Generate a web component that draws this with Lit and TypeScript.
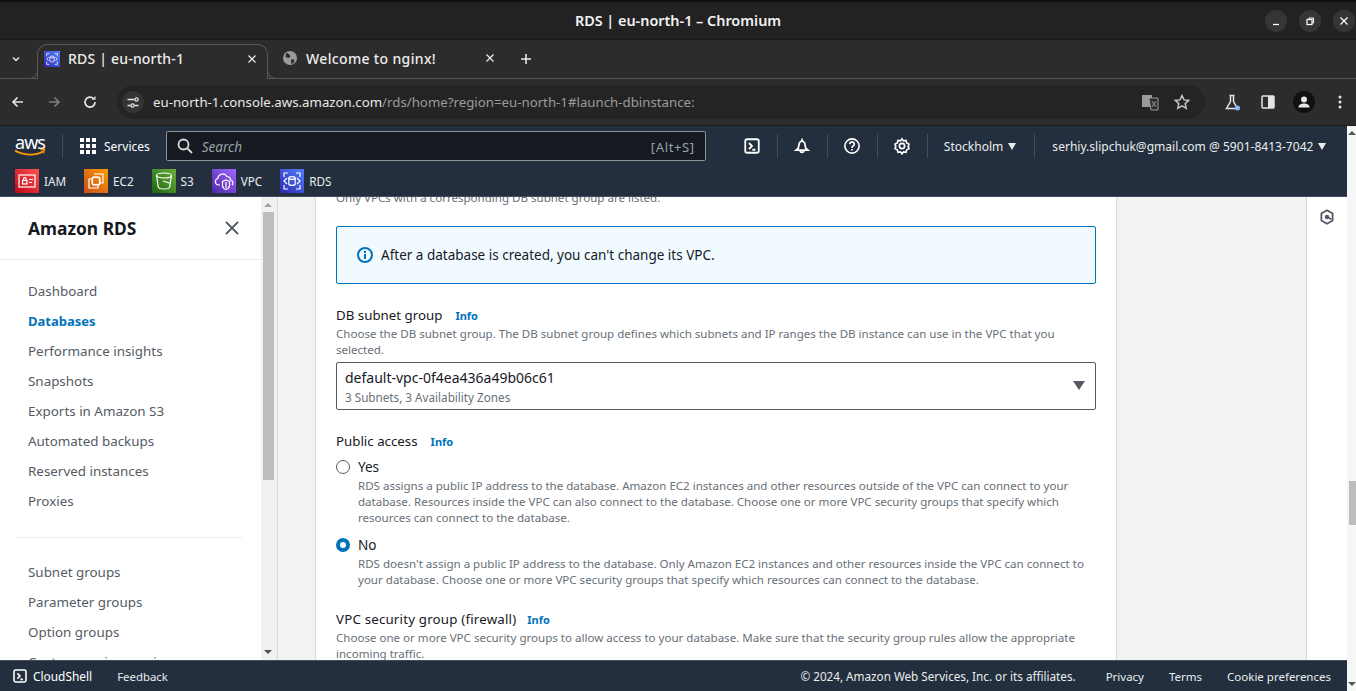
import {LitElement, html, css, svg} from 'lit';
import {customElement} from 'lit/decorators.js';

const icon = (size: number, body: unknown, box = 24) => html`<svg
  width=${size} height=${size} viewBox="0 0 ${box} ${box}" fill="none" stroke="currentColor">${body}</svg>`;

// service tiles in the favourites bar
const rdsGlyph = svg`<g stroke="#fff" stroke-width="1.2">
  <path d="M4 8V4h4M16 4h4v4M4 16v4h4M16 20h4v-4"/>
  <path d="M7 9l-3 3 3 3M17 9l3 3-3 3" />
  <ellipse cx="12" cy="9" rx="3.200" ry="1.400"/><path d="M8.800 9v6c0 .8 1.400 1.400 3.200 1.400s3.200-.6 3.200-1.400V9"/></g>`;

const favs = [
  {name: 'IAM', cls: 'iam', glyph: svg`<g stroke="#fff" stroke-width="1.2">
    <rect x="4" y="6" width="16" height="12"/><rect x="7.500" y="11.500" width="4.500" height="3.500"/>
    <path d="M8.500 11.500v-1.500a1.300 1.300 0 0 1 2.600 0v1.500M14 10.500h4M14 13.500h3"/></g>`},
  {name: 'EC2', cls: 'ec2', glyph: svg`<g stroke="#fff" stroke-width="1.2">
    <path d="M10 5h9v9h-3M8 10H5v9h9v-3"/><rect x="8.500" y="8.500" width="7" height="7"/>
    <path d="M10 7v1.500M12 7v1.500M14 7v1.500M10 15.500v1.500M12 15.500v1.500M14 15.500v1.500M7 10h1.500M7 12h1.500M7 14h1.500M15.500 10h1.500M15.500 12h1.500M15.500 14h1.500"/></g>`},
  {name: 'S3', cls: 's3', glyph: svg`<g stroke="#fff" stroke-width="1.2">
    <ellipse cx="12" cy="6.500" rx="7.500" ry="2.500"/><path d="M4.500 6.500l1.800 11.500c.2 1.200 2.800 2 5.700 2s5.500-.8 5.700-2l1.800-11.500"/>
    <path d="M11 12l8 2.500"/></g>`},
  {name: 'VPC', cls: 'vpc', glyph: svg`<g stroke="#fff" stroke-width="1.2">
    <path d="M8 16H6.500a3.300 3.300 0 0 1-.6-6.500 4.800 4.800 0 0 1 9-2 3.700 3.700 0 0 1 3.600 3.500A3 3 0 0 1 20 16"/>
    <path d="M14 11l3.500 1.500v4c0 2-1.500 3.300-3.500 4-2-.7-3.500-2-3.500-4v-4zM14 13v6"/></g>`},
  {name: 'RDS', cls: 'rds', glyph: rdsGlyph},
];

const navTop = ['Dashboard', 'Databases', 'Performance insights', 'Snapshots', 'Exports in Amazon S3',
  'Automated backups', 'Reserved instances', 'Proxies'];
const navBottom = ['Subnet groups', 'Parameter groups', 'Option groups', 'Custom engine versions'];

const terminal = svg`<rect x="3" y="3" width="18" height="18" rx="2.500" stroke-width="2.400"/>
  <path d="M8 8l4 4-4 4M12.500 17h4" stroke-width="2.400"/>`;

const closeX = svg`<path d="M2.500 2.500l7 7M9.500 2.500l-7 7" stroke-width="1.300"/>`;

@customElement('app-root')
export class AppRoot extends LitElement {
  static styles = css`
    :host {
      display: block;
      width: 1356px;
      height: 691px;
      overflow: hidden;
      font-family: "Noto Sans", sans-serif;
      color: #16191f;
    }
    .window { display: flex; flex-direction: column; height: 691px; }

    /* browser chrome */
    .titlebar {
      height: 37px;
      flex: none;
      border-top: 2px solid #0e0e0e;
      background: #222;
      display: flex;
      align-items: center;
      justify-content: flex-end;
      gap: 12px;
      padding-right: 1px;
      position: relative;
      color: #fff;
    }
    .title {
      position: absolute;
      left: 0;
      right: 0;
      top: 10px;
      text-align: center;
      font-size: 14.400px;
      line-height: 18px;
      font-weight: 600;
      color: #f2f2f2;
    }
    .winbtn {
      width: 22px;
      height: 22px;
      border-radius: 50%;
      background: #363636;
      display: flex;
      align-items: center;
      justify-content: center;
      color: #fff;
    }
    .tabstrip {
      height: 40px;
      flex: none;
      background: #2c2c2c;
      border-top: 1px solid #1a1a1a;
      box-sizing: border-box;
      border-bottom: 1px solid #585858;
      display: flex;
      align-items: flex-end;
      color: #e8e8e8;
      font-size: 14px;
    }
    .tabmenu { width: 27px; height: 32px; margin-bottom: 3px; padding-left: 10px; display: flex; align-items: center; }
    .tab {
      height: 35px;
      box-sizing: border-box;
      display: flex;
      align-items: center;
      gap: 8px;
      padding: 0 9px 7px 6px;
      width: 231px;
      margin-bottom: -1px;
      position: relative;
    }
    .tab.active {
      background: #2c2c2c;
      border: 1px solid #585858;
      border-bottom: none;
      border-radius: 10px 10px 0 0;
    }
    .tab.active::before,
    .tab.active::after {
      content: '';
      position: absolute;
      bottom: 0;
      width: 9px;
      height: 9px;
      border-bottom: 1px solid #585858;
      background: #2c2c2c;
    }
    .tab.active::before { left: -10px; border-right: 1px solid #585858; border-bottom-right-radius: 9px; }
    .tab.active::after { right: -10px; border-left: 1px solid #585858; border-bottom-left-radius: 9px; }
    .tab.active .tab-label { letter-spacing: .2px; }
    .tab.second { width: 236px; padding-left: 15px; padding-right: 8px; gap: 9px; }
    .tab.second .tab-label { letter-spacing: .35px; }
    .tab-label { flex: 1; white-space: nowrap; font-weight: 500; color: #ececec; }
    .tabicon { width: 16px; height: 16px; background: linear-gradient(45deg, #2e27ad, #527fff); display: block; }
    .plus { width: 36px; height: 32px; margin: 0 0 3px 4px; display: flex; align-items: center; justify-content: center; }

    .toolbar {
      height: 46px;
      flex: none;
      background: #2c2c2c;
      display: flex;
      align-items: center;
      color: #e3e3e3;
      border-bottom: 1px solid #1c1c1c;
      overflow: hidden;
    }
    .toolbtn { width: 36px; flex: none; display: flex; justify-content: center; align-items: center; }
    .toolbtn.dim { color: #7d7d7d; }
    .backs { display: flex; flex: none; }
    .omnibox {
      margin-left: 9px;
      width: 1088px;
      flex: none;
      height: 34px;
      border-radius: 17px;
      background: #242424;
      display: flex;
      align-items: center;
      box-sizing: border-box;
      padding-left: 5px;
      padding-right: 14px;
    }
    .siteinfo {
      width: 22px;
      height: 22px;
      border-radius: 50%;
      background: #343434;
      display: flex;
      align-items: center;
      justify-content: center;
      margin-right: 9px;
    }
    .url { flex: 1; font-size: 13.250px; white-space: nowrap; color: #e8e8e8; }
    .url span { color: #9b9b9b; }
    .omni-icons { display: flex; align-items: center; gap: 14px; }
    .tools { display: flex; align-items: center; flex: none; margin-left: 9px; }
    .avatar {
      width: 22px;
      height: 22px;
      border-radius: 50%;
      background: #111;
      display: flex;
      align-items: center;
      justify-content: center;
    }

    /* console */
    .viewport { flex: 1; min-height: 0; display: flex; }
    .page { flex: 1; min-width: 0; display: flex; flex-direction: column; }
    .pagebar {
      width: 9px;
      background: #f6f6f6;
      position: relative;
    }
    .pagebar .thumb {
      position: absolute;
      left: 2px;
      right: 0;
      top: 355px;
      height: 44px;
      background: #bdbdbd;
    }
    .pagebar .up, .pagebar .down { position: absolute; left: 1px; }
    .pagebar .up { top: 5px; border: 4px solid transparent; border-bottom: 4px solid #555; border-top: none; }
    .pagebar .down { bottom: 5px; border: 4px solid transparent; border-top: 4px solid #555; border-bottom: none; }

    .nav {
      flex: none;
      height: 71px;
      box-sizing: border-box;
      background: #232f3e;
      border-bottom: 1px solid #414d5c;
      color: #fff;
      font-size: 12px;
    }
    .navtop { height: 40px; display: flex; align-items: center; padding-left: 14px; }
    .logo { width: 32px; height: 24px; position: relative; }
    .logo b {
      display: block;
      font-weight: 400;
      font-size: 18px;
      line-height: 16px;
      letter-spacing: -1px;
      color: #fff;
      text-align: center;
    }
    .logo svg { position: absolute; left: 0; top: 14px; }
    .vsep { width: 1px; height: 24px; background: #414d5c; flex: none; }
    .logo + .vsep { margin-left: 16px; }
    .services { display: flex; align-items: center; gap: 8px; margin-right: 16px; white-space: nowrap; font-size: 12px; }
    .grid {
      display: grid;
      grid-template-columns: repeat(3, 4px);
      grid-auto-rows: 4px;
      gap: 2px;
      margin-left: 17px;
    }
    .grid i { background: #fff; display: block; }
    .search {
      width: 540px;
      height: 30px;
      box-sizing: border-box;
      border: 1px solid #879596;
      border-radius: 2px;
      background: #16191f;
      display: flex;
      align-items: center;
      padding: 0 10px;
      color: #d5dbdb;
      margin-right: 22px;
    }
    .search em { flex: 1; margin: 1px 0 0 9px; font-size: 13.500px; color: #95a5a6; }
    .search span { margin-top: 1px; font-size: 13px; letter-spacing: .65px; color: #95a5a6; }
    .navicon { width: 49px; flex: none; display: flex; justify-content: center; color: #fff; }
    .navicons { display: flex; align-items: center; }
    .region { display: flex; align-items: center; white-space: nowrap; font-size: 12.050px; color: #eaeded; margin-left: 17px; }
    .navicons + .region { margin-left: 16px; }
    .region + .vsep { margin-left: 18px; }
    .caret { width: 0; height: 0; border: 4.500px solid transparent; border-top: 7px solid #eaeded; border-bottom: none; display: inline-block; margin-left: 5px; }

    .favs { height: 30px; display: flex; align-items: flex-start; padding-left: 15px; font-size: 11.700px; color: #eaeded; }
    .fav { display: flex; align-items: center; gap: 5px; height: 24px; margin-top: 3px; margin-right: 18px; }
    .tile { width: 24px; height: 24px; display: block; }
    .iam { background: linear-gradient(45deg, #bd0816, #ff5252); }
    .ec2 { background: linear-gradient(45deg, #c8511b, #ff9900); }
    .s3 { background: linear-gradient(45deg, #1b660f, #6cae3e); }
    .vpc { background: linear-gradient(45deg, #4d27a8, #a166ff); }
    .rds { background: linear-gradient(45deg, #2e27ad, #527fff); }

    .middle { flex: 1; min-height: 0; display: flex; background: #fff; }
    .sidebar { width: 261px; flex: none; overflow: hidden; }
    .side-head {
      height: 62px;
      border-bottom: 1px solid #eaeded;
      display: flex;
      align-items: center;
      justify-content: space-between;
      padding: 0 21px 0 28px;
      font-size: 17.400px;
      font-weight: 700;
    }
    .side-head svg { color: #545b64; }
    .side-list { padding-top: 16px; }
    .side-list a {
      display: block;
      height: 30px;
      line-height: 30px;
      padding-left: 28px;
      font-size: 13.400px;
      color: #545b64;
      white-space: nowrap;
    }
    .side-list a.on { color: #0073bb; font-weight: 700; font-size: 13px; }
    .side-rule { height: 1px; background: #eaeded; margin: 21px 19px 19px 16px; }

    .sidebar-bar { width: 16px; flex: none; background: #f1f1f1; position: relative; }
    .sidebar-bar .thumb { position: absolute; left: 2px; width: 11px; top: 15px; height: 268px; background: #bdbdbd; }
    .sidebar-bar .up { position: absolute; left: 3px; top: 6px; border: 4px solid transparent; border-bottom: 4px solid #a3a3a3; border-top: none; }
    .sidebar-bar .down { position: absolute; left: 3px; bottom: 6px; border: 4px solid transparent; border-top: 4px solid #505050; border-bottom: none; }

    .main {
      flex: 1;
      min-width: 0;
      background: #f2f3f3;
      border-left: 1px solid #d5dbdb;
      padding-left: 37px;
      overflow: hidden;
    }
    .panel {
      width: 760px;
      height: 100%;
      overflow: hidden;
      background: #fff;
      border-left: 1px solid #d5dbdb;
      border-right: 1px solid #d5dbdb;
      padding: 0 20px;
    }
    .scrolled { margin-top: -7px; }
    .desc { font-size: 11.550px; line-height: 16px; color: #687078; }
    .alert {
      margin-top: 20px;
      height: 58px;
      box-sizing: border-box;
      border: 1px solid #0073bb;
      border-radius: 2px;
      background: #f1faff;
      display: flex;
      align-items: center;
      gap: 8px;
      padding-left: 20px;
      font-size: 13.500px;
      color: #16191f;
    }
    .alert svg { color: #0073bb; }
    .label { margin-top: 21px; height: 20px; line-height: 20px; font-size: 13.300px; display: flex; gap: 13px; margin-bottom: 1px; }
    .label.wide { letter-spacing: .19px; gap: 11px; }
    .label a { color: #0073bb; font-weight: 700; font-size: 11px; letter-spacing: 0; padding-top: 1px; }
    .select {
      margin-top: 4px;
      height: 48px;
      box-sizing: border-box;
      border: 1px solid #545b64;
      border-radius: 2px;
      padding: 5px 8px;
      position: relative;
      font-size: 14px;
      line-height: 20px;
    }
    .select .sub { font-size: 11.700px; line-height: 18px; color: #687078; }
    .select .arrow {
      position: absolute;
      right: 10px;
      top: 18px;
      width: 0;
      height: 0;
      border: 6px solid transparent;
      border-top: 9px solid #545b64;
      border-bottom: none;
    }
    .radio { display: flex; align-items: center; height: 20px; gap: 8px; font-size: 13.500px; margin-top: 6px; }
    .radio.no { margin-top: 9px; }
    .dot { width: 14px; height: 14px; box-sizing: border-box; border: 1px solid #545b64; border-radius: 50%; background: #fff; }
    .dot.on { border: 4px solid #0073bb; }
    .radio-desc { margin: 1px 0 0 22px; }

    .tools-rail { width: 40px; flex: none; border-left: 1px solid #d5dbdb; background: #fff; display: flex; justify-content: center; padding-top: 11px; color: #545b64; }

    .footer {
      height: 31px;
      flex: none;
      box-sizing: border-box;
      background: #232f3e;
      border-top: 1px solid #414d5c;
      display: flex;
      align-items: center;
      padding: 0 16px 0 12px;
      font-size: 11.700px;
      color: #eaeded;
      white-space: nowrap;
    }
    .footer .shell { display: flex; align-items: center; gap: 5px; margin-right: 25px; color: #fff; font-size: 11.900px; }
    .footer .feedback { font-size: 11.400px; }
    .footer .spacer { flex: 1; }
    .footer .links { display: flex; gap: 25px; margin-left: 30px; font-size: 11.500px; }
  `;

  render() {
    return html`<div class="window">
      ${this.renderBrowser()}
      <div class="viewport">
        <div class="page">
          ${this.renderNav()}
          <div class="middle">
            ${this.renderSidebar()}
            <div class="sidebar-bar"><i class="up"></i><i class="thumb"></i><i class="down"></i></div>
            <div class="main">${this.renderPanel()}</div>
            <div class="tools-rail">
              ${icon(18, svg`<path d="M12 3l7.500 4.300v9.400L12 21l-7.500-4.300V7.300z" stroke-width="2.400"/><circle cx="12" cy="12" r="3" fill="currentColor" stroke="none"/><path d="M12 12l6 3" stroke-width="2.400"/>`)}
            </div>
          </div>
          <div class="footer">
            <div class="shell">${icon(16, terminal)}CloudShell</div>
            <span class="feedback">Feedback</span>
            <span class="spacer"></span>
            <span>© 2024, Amazon Web Services, Inc. or its affiliates.</span>
            <div class="links"><span>Privacy</span><span>Terms</span><span>Cookie preferences</span></div>
          </div>
        </div>
        <div class="pagebar"><i class="up"></i><i class="thumb"></i><i class="down"></i></div>
      </div>
    </div>`;
  }

  renderBrowser() {
    return html`
      <div class="titlebar">
        <div class="title">RDS | eu-north-1 – Chromium</div>
        <div class="winbtn">${icon(12, svg`<path d="M3 9.500h6" stroke-width="1.300"/>`, 12)}</div>
        <div class="winbtn">${icon(12, svg`<rect x="3" y="4.500" width="5" height="5" stroke-width="1.200"/><path d="M5 4.500V3h4.500v5H8" stroke-width="1"/>`, 12)}</div>
        <div class="winbtn">${icon(12, svg`<path d="M2.500 2.500l7 7M9.500 2.500l-7 7" stroke-width="1.200"/>`, 12)}</div>
      </div>
      <div class="tabstrip">
        <div class="tabmenu">${icon(12, svg`<path d="M3 4.500l3 3 3-3" stroke-width="1.500"/>`, 12)}</div>
        <div class="tab active">
          <span class="tabicon">${icon(16, rdsGlyph)}</span>
          <span class="tab-label">RDS | eu-north-1</span>
          ${icon(12, closeX, 12)}
        </div>
        <div class="tab second">
          ${icon(14, svg`<circle cx="12" cy="12" r="12" fill="#9a9a9a" stroke="none"/><path d="M6 3l5 3 2 4-4 2-5-2zM14 14l6 1-2 6-4 1z" fill="#2c2c2c" stroke="none"/>`)}
          <span class="tab-label">Welcome to nginx!</span>
          ${icon(12, closeX, 12)}
        </div>
        <div class="plus">${icon(14, svg`<path d="M7 2v10M2 7h10" stroke-width="1.600"/>`, 14)}</div>
      </div>
      <div class="toolbar">
        <div class="backs">
          <div class="toolbtn">${icon(16, svg`<path d="M13 8H3M7.500 3.500L3 8l4.500 4.500" stroke-width="1.700"/>`, 16)}</div>
          <div class="toolbtn dim">${icon(16, svg`<path d="M3 8h10M8.500 3.500L13 8l-4.500 4.500" stroke-width="1.700"/>`, 16)}</div>
          <div class="toolbtn">${icon(16, svg`<path d="M13 8a5 5 0 1 1-1.500-3.500" stroke-width="1.700"/><path d="M13.500 2v3.800H9.700z" fill="currentColor" stroke="none"/>`, 16)}</div>
        </div>
        <div class="omnibox">
          <div class="siteinfo">${icon(14, svg`<path d="M1.500 4.500h7M1.500 10.500h3M8.500 10.500h4" stroke-width="1.300"/><circle cx="10.500" cy="4.500" r="1.600" stroke-width="1.300"/><circle cx="6.500" cy="10.500" r="1.600" stroke-width="1.300"/>`, 14)}</div>
          <div class="url">eu-north-1.console.aws.amazon.com<span>/rds/home?region=eu-north-1#launch-dbinstance:</span></div>
          <div class="omni-icons">
            ${icon(18, svg`<rect x="1" y="2" width="10" height="12" fill="#9a9a9a" stroke="none"/><path d="M8 5h9v12H10z" fill="#2c2c2c" stroke="#9a9a9a" stroke-width="1"/><path d="M11 8l4 6M15 8l-4 6" stroke="#9a9a9a" stroke-width="1"/>`, 18)}
            ${icon(18, svg`<path d="M9 2.500l2 4.400 4.700.5-3.500 3.200 1 4.700L9 12.900l-4.200 2.400 1-4.700L2.300 7.400 7 6.900z" stroke-width="1.500" stroke="#c4c4c4"/>`, 18)}
          </div>
        </div>
        <div class="tools">
          <div class="toolbtn">${icon(18, svg`<path d="M6.500 2.500h5M7.500 2.500v6L3.500 15.500h11l-4-7v-6" stroke-width="1.500"/><circle cx="14.500" cy="15" r="2.500" fill="#8ab4f8" stroke="none"/>`, 18)}</div>
          <div class="toolbtn">${icon(18, svg`<rect x="3" y="3" width="12" height="12" rx="1" stroke-width="1.500"/><rect x="9" y="3" width="6" height="12" fill="currentColor" stroke="none"/>`, 18)}</div>
          <div class="toolbtn"><div class="avatar">${icon(16, svg`<circle cx="8" cy="5.500" r="3" fill="#e8e8e8" stroke="none"/><path d="M2.500 13.500c0-3 2.500-4 5.500-4s5.500 1 5.500 4z" fill="#e8e8e8" stroke="none"/>`, 16)}</div></div>
          <div class="toolbtn">${icon(16, svg`<circle cx="8" cy="3" r="1.500" fill="currentColor" stroke="none"/><circle cx="8" cy="8" r="1.500" fill="currentColor" stroke="none"/><circle cx="8" cy="13" r="1.500" fill="currentColor" stroke="none"/>`, 16)}</div>
        </div>
      </div>`;
  }

  renderNav() {
    return html`<div class="nav">
      <div class="navtop">
        <div class="logo">
          <b>aws</b>
          <svg width="32" height="9" viewBox="0 0 32 9" fill="none">
            <path d="M1 2.500c8 5 20 5.500 28 1" stroke="#ff9900" stroke-width="1.700"/>
            <path d="M26.500 1.500l4-.3-1.200 4" stroke="#ff9900" stroke-width="1.400"/>
          </svg>
        </div>
        <div class="vsep"></div>
        <div class="services">
          <div class="grid">${Array.from({length: 9}, () => html`<i></i>`)}</div>
          Services
        </div>
        <div class="search">
          ${icon(16, svg`<circle cx="6.500" cy="6.500" r="5" stroke-width="1.800"/><path d="M10.500 10.500l4.500 4.500" stroke-width="1.800"/>`, 16)}
          <em>Search</em><span>[Alt+S]</span>
        </div>
        <div class="navicons">
          <div class="navicon">${icon(18, terminal)}</div><div class="vsep"></div>
          <div class="navicon">${icon(18, svg`<path d="M12 2v2.500M12 4.500l3.500 3.500L17 15l3 2.500H4L7 15l1.500-7zM9.500 18a2.500 2.500 0 0 0 5 0" stroke-width="2.200"/>`)}</div><div class="vsep"></div>
          <div class="navicon">${icon(18, svg`<circle cx="12" cy="12" r="9.500" stroke-width="2.200"/><path d="M9 9.500a3 3 0 1 1 4.500 2.600c-1 .6-1.500 1.200-1.500 2.400M12 16v2" stroke-width="2.200"/>`)}</div><div class="vsep"></div>
          <div class="navicon">${icon(18, svg`<path d="M12 2.500l2 2.700 3.300-.5 1 3.200 3 1.500-1 3.100 1 3-3 1.600-1 3.200-3.300-.5-2 2.700-2-2.700-3.300.5-1-3.200-3-1.600 1-3-1-3.100 3-1.500 1-3.200 3.300.5z" stroke-width="2.200"/><circle cx="12" cy="12" r="3.500" stroke-width="2.200"/>`)}</div><div class="vsep"></div>
        </div>
        <div class="region">Stockholm<i class="caret"></i></div>
        <div class="vsep"></div>
        <div class="region">serhiy.slipchuk@gmail.com @ 5901-8413-7042<i class="caret"></i></div>
      </div>
      <div class="favs">
        ${favs.map((f) => html`<div class="fav">
          <span class="tile ${f.cls}">${icon(24, f.glyph)}</span>${f.name}
        </div>`)}
      </div>
    </div>`;
  }

  renderSidebar() {
    return html`<div class="sidebar">
      <div class="side-head">
        Amazon RDS
        ${icon(16, svg`<path d="M2 2l12 12M14 2L2 14" stroke-width="1.800"/>`, 16)}
      </div>
      <div class="side-list">
        ${navTop.map((n) => html`<a class=${n === 'Databases' ? 'on' : ''}>${n}</a>`)}
        <div class="side-rule"></div>
        ${navBottom.map((n) => html`<a>${n}</a>`)}
      </div>
    </div>`;
  }

  renderPanel() {
    return html`<div class="panel"><div class="scrolled">
      <div class="desc">Only VPCs with a corresponding DB subnet group are listed.</div>
      <div class="alert">
        ${icon(16, svg`<circle cx="8" cy="8" r="7" stroke-width="2"/><path d="M8 7v5" stroke-width="2"/><path d="M8 4v2" stroke-width="2"/>`, 16)}
        After a database is created, you can't change its VPC.
      </div>
      <div class="label">DB subnet group <a>Info</a></div>
      <div class="desc">Choose the DB subnet group. The DB subnet group defines which subnets and IP ranges the DB instance can use in the VPC that you selected.</div>
      <div class="select">
        default-vpc-0f4ea436a49b06c61
        <div class="sub">3 Subnets, 3 Availability Zones</div>
        <i class="arrow"></i>
      </div>
      <div class="label">Public access <a>Info</a></div>
      <div class="radio"><i class="dot"></i>Yes</div>
      <div class="desc radio-desc">RDS assigns a public IP address to the database. Amazon EC2 instances and other resources outside of the VPC can connect to your database. Resources inside the VPC can also connect to the database. Choose one or more VPC security groups that specify which resources can connect to the database.</div>
      <div class="radio no"><i class="dot on"></i>No</div>
      <div class="desc radio-desc">RDS doesn't assign a public IP address to the database. Only Amazon EC2 instances and other resources inside the VPC can connect to your database. Choose one or more VPC security groups that specify which resources can connect to the database.</div>
      <div class="label wide">VPC security group (firewall) <a>Info</a></div>
      <div class="desc">Choose one or more VPC security groups to allow access to your database. Make sure that the security group rules allow the appropriate incoming traffic.</div>
    </div></div>`;
  }
}
